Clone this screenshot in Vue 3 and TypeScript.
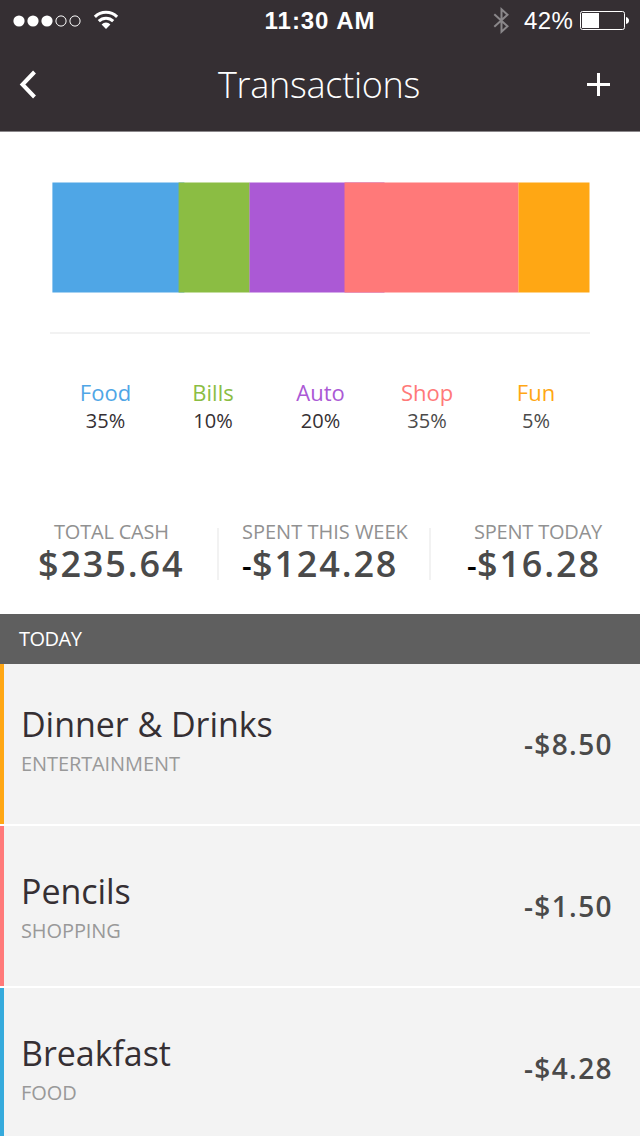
<script setup lang="ts">
interface Category { name: string; share: string; tone: string; soft?: boolean }
interface Stat { label: string; sign: string; value: string; key: string }
interface Transaction { title: string; category: string; amount: string; tone: string }

const categories: Category[] = [
  { name: 'Food', share: '35%', tone: 'food' },
  { name: 'Bills', share: '10%', tone: 'bills' },
  { name: 'Auto', share: '20%', tone: 'auto' },
  { name: 'Shop', share: '35%', tone: 'shop', soft: true },
  { name: 'Fun', share: '5%', tone: 'fun', soft: true },
]

const stats: Stat[] = [
  { label: 'TOTAL CASH', sign: '', value: '$235.64', key: 'cash' },
  { label: 'SPENT THIS WEEK', sign: '-', value: '$124.28', key: 'week' },
  { label: 'SPENT TODAY', sign: '-', value: '$16.28', key: 'day' },
]

const transactions: Transaction[] = [
  { title: 'Dinner & Drinks', category: 'ENTERTAINMENT', amount: '-$8.50', tone: 'fun' },
  { title: 'Pencils', category: 'SHOPPING', amount: '-$1.50', tone: 'shop' },
  { title: 'Breakfast', category: 'FOOD', amount: '-$4.28', tone: 'meal' },
]
</script>

<template>
  <div class="screen">
    <header class="top">
      <div class="status">
        <div class="status-left">
          <svg width="70" height="14" viewBox="0 0 70 14">
            <circle cx="7" cy="7" r="5.6" fill="#fff" />
            <circle cx="21" cy="7" r="5.6" fill="#fff" />
            <circle cx="35" cy="7" r="5.6" fill="#fff" />
            <circle cx="49" cy="7" r="5.1" class="ring" />
            <circle cx="63" cy="7" r="5.1" class="ring" />
          </svg>
          <svg class="wifi" width="26" height="20" viewBox="0 0 26 20">
            <path d="M1.9 6.9A15.8 15.8 0 0 1 24.1 6.9" class="wave" />
            <path d="M5.8 11.1A10.3 10.3 0 0 1 20.2 11.1" class="wave" />
            <path d="M13 19L8.6 14.4A6.3 6.3 0 0 1 17.4 14.4Z" fill="#fff" />
          </svg>
        </div>
        <div class="time">11:30 AM</div>
        <div class="status-right">
          <svg width="17" height="28" viewBox="0 0 17 28">
            <path d="M1.3 8.2L14.5 20.3L8.5 25.7V3.3L14.5 8.7L1.3 20.8" class="bluetooth" />
          </svg>
          <span class="percent">42%</span>
          <svg width="50" height="20" viewBox="0 0 50 20">
            <rect x="0.5" y="0.5" width="44" height="18" rx="2" class="cell" />
            <rect x="2" y="2" width="17" height="15" fill="#fff" />
            <path d="M46 6Q49 7 49 9.5T46 13Z" fill="#fff" />
          </svg>
        </div>
      </div>
      <div class="nav">
        <svg width="20" height="30" viewBox="0 0 20 30">
          <path d="M16.5 2L4.5 14.5L16.5 27" class="chevron" />
        </svg>
        <h1>Transactions</h1>
        <svg width="25" height="30" viewBox="0 0 25 30">
          <path d="M1 14.5H24M12.5 3V26" class="plus" />
        </svg>
      </div>
    </header>

    <section class="summary">
      <svg class="chart" width="540" height="112" viewBox="0 0 540 112">
        <rect x="2.4" y="0.5" width="132" height="110" fill="#4fa6e6" />
        <rect x="128.6" y="0.5" width="71.1" height="110" fill="#8bbd43" />
        <rect x="199.5" y="0.5" width="135" height="110" fill="#ab59d5" />
        <rect x="294.5" y="0.5" width="174.1" height="110" fill="#ff7979" />
        <rect x="468.5" y="0.5" width="71" height="110" fill="#ffa714" />
      </svg>
      <div class="rule"></div>
      <div class="legend">
        <div v-for="item in categories" :key="item.name" class="legend-item">
          <span class="name" :class="item.tone">{{ item.name }}</span>
          <span class="share" :class="{ soft: item.soft }">{{ item.share }}</span>
        </div>
      </div>
      <div class="stats">
        <div v-for="stat in stats" :key="stat.key" class="stat" :class="stat.key">
          <span class="stat-label">{{ stat.label }}</span>
          <span class="stat-value"><span v-if="stat.sign" class="sign">{{ stat.sign }}</span>{{ stat.value }}</span>
        </div>
      </div>
    </section>

    <div class="day-heading">TODAY</div>
    <ul class="list">
      <li v-for="(entry, i) in transactions" :key="entry.title" class="entry" :class="['edge-' + entry.tone, { first: i === 0 }]">
        <div class="entry-text">
          <span class="title">{{ entry.title }}</span>
          <span class="category">{{ entry.category }}</span>
        </div>
        <span class="amount">{{ entry.amount }}</span>
      </li>
    </ul>
  </div>
</template>

<style>
html, body { margin: 0; background: #fff; overflow: hidden; }
</style>

<style scoped>
.screen { width: 640px; height: 1136px; overflow: hidden; background: #fff; font-family: "Open Sans", sans-serif; color: #352f33; }
.screen svg { display: block; flex: none; }
.top { box-sizing: border-box; height: 132px; background: #352f33; border-bottom: 1px solid #8a878a; color: #fff; }
.status { display: grid; grid-template-columns: 220px 1fr 220px; height: 42px; font-family: "Liberation Sans", sans-serif; }
.status-left { display: flex; padding-left: 11.5px; padding-top: 10px; gap: 11.5px; }
.status-left svg:first-child { margin-top: 3.6px; }
.ring { fill: none; stroke: #fff; stroke-width: 1; }
.wave { fill: none; stroke: #fff; stroke-width: 3; }
.time { font-size: 24px; font-weight: 700; line-height: 42px; text-align: center; letter-spacing: 0.95px; white-space: nowrap; }
.status-right { display: flex; padding-left: 73px; padding-top: 6px; }
.bluetooth { fill: none; stroke: #8a878a; stroke-width: 2; }
.percent { width: 56px; margin-left: 14px; font-size: 24px; line-height: 30px; letter-spacing: 0.4px; }
.status-right svg:last-child { margin-top: 5px; }
.cell { fill: none; stroke: #fff; stroke-width: 1; }
.nav { display: flex; justify-content: space-between; align-items: center; height: 86px; padding: 0 29px 0 18px; }
.nav h1 { margin: 0 0 0 14px; font-size: 36px; line-height: 50px; font-weight: 300; letter-spacing: -0.28px; }
.chevron { fill: none; stroke: #fff; stroke-width: 4; }
.plus { fill: none; stroke: #fff; stroke-width: 3; }
.summary { height: 482px; padding: 50px 50px 0; box-sizing: border-box; }
.rule { height: 2px; margin-top: 38px; background: #f2f2f2; }
.legend { display: grid; grid-template-columns: 107px 108px 107px 106px 112px; margin: 43px 0 0 2px; text-align: center; }
.legend-item { display: flex; flex-direction: column; }
.name { font-size: 22px; line-height: 30px; }
.share { font-size: 20px; line-height: 26px; margin-top: 1px; }
.soft { color: #4a4a4a; }
.food { color: #4fa6e6; }
.bills { color: #8bbd43; }
.auto { color: #ab59d5; }
.shop { color: #ff7979; }
.fun { color: #ffa714; }
.stats { display: grid; grid-template-columns: 167px 212px 211px; grid-template-rows: 52px; height: 52px; margin: 94px -50px 0 0; }
.stat { box-sizing: border-box; height: 52px; display: flex; flex-direction: column; }
.week, .day { border-left: 2px solid #f2f2f2; }
.stat-label { font-size: 20px; line-height: 24px; margin-top: -8px; color: #919191; white-space: nowrap; letter-spacing: -0.2px; }
.stat-value { margin-top: 1px; font-size: 36px; line-height: 38px; font-weight: 600; color: #4a4a4a; letter-spacing: 1.85px; white-space: nowrap; }
.sign { color: #000; font-size: 30px; letter-spacing: 0.3px; }
.cash .stat-label { margin-left: 4px; }
.cash .stat-value { margin-left: -12px; }
.week .stat-label, .week .stat-value { margin-left: 23px; }
.week .stat-label { letter-spacing: 0; }
.day .stat-label { margin-left: 43px; }
.day .stat-value { margin-left: 36px; }
.day-heading { height: 50px; padding-left: 19px; background: #5f5f5f; color: #fff; font-size: 20px; line-height: 49px; letter-spacing: -0.5px; }
.list { margin: 0; padding: 0; list-style: none; display: flex; flex-direction: column; gap: 2px; }
.entry { box-sizing: border-box; display: flex; justify-content: space-between; align-items: flex-start; height: 160px; padding: 0 27px 0 17px; border-left: 4px solid; background: #f3f3f3; }
.edge-fun { border-color: #ffa714; }
.edge-shop { border-color: #ff7979; }
.edge-meal { border-color: #35aadc; }
.entry-text { display: flex; flex-direction: column; padding-top: 42px; }
.first .entry-text { padding-top: 37px; }
.title { font-size: 34px; line-height: 46px; letter-spacing: -0.05px; }
.category { margin-top: 2px; font-size: 20px; line-height: 30px; color: #999; letter-spacing: -0.1px; }
.amount { margin-top: 61px; font-size: 28px; line-height: 38px; font-weight: 600; color: #4a4a4a; letter-spacing: 1.4px; }
</style>
